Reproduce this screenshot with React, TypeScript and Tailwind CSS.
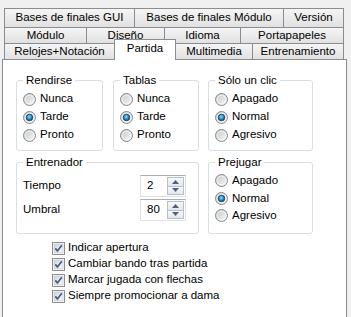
import { useId } from "react";

const ROW1 = [
  { label: "Bases de finales GUI", w: "w-[130px]" },
  { label: "Bases de finales Módulo", w: "w-[149px]" },
  { label: "Versión", w: "w-[61px]" },
];
const ROW2 = [
  { label: "Módulo", w: "w-[82px]" },
  { label: "Diseño", w: "w-[78px]" },
  { label: "Idioma", w: "w-[76px]" },
  { label: "Portapapeles", w: "w-[104px]" },
];

const CHECKS = [
  "Indicar apertura",
  "Cambiar bando tras partida",
  "Marcar jugada con flechas",
  "Siempre promocionar a dama",
];

function Tab({ label, w, last }: { label: string; w: string; last?: boolean }) {
  return (
    <div
      className={`${w} h-full flex items-center justify-center border-t border-l border-[#898c95] bg-gradient-to-b from-[#f5f5f5] to-[#e1e1e1] ${last ? "border-r" : ""}`}
    >
      {label}
    </div>
  );
}

function Radio({ checked }: { checked?: boolean }) {
  const id = useId().replace(/:/g, "");
  return (
    <svg width="13" height="13" viewBox="0 0 13 13" className="flex-shrink-0">
      <defs>
        <linearGradient id={`o${id}`} x1="0" y1="0" x2="1" y2="1">
          <stop offset="0" stopColor="#c8c8c8" />
          <stop offset="1" stopColor="#f7f7f7" />
        </linearGradient>
        <radialGradient id={`d${id}`} cx="0.45" cy="0.4" r="0.6">
          <stop offset="0" stopColor="#8fdcfb" />
          <stop offset="0.55" stopColor="#2b8fd0" />
          <stop offset="1" stopColor="#10476f" />
        </radialGradient>
      </defs>
      <circle cx="6.5" cy="6.5" r="6" fill={`url(#o${id})`} stroke="#868a90" strokeWidth="1" />
      <circle cx="6.5" cy="6.5" r="4.3" fill="none" stroke="#ffffff" strokeOpacity="0.6" strokeWidth="1" />
      {checked && <circle cx="6.5" cy="6.5" r="3.3" fill={`url(#d${id})`} stroke="#1b3f5f" strokeWidth="0.8" />}
    </svg>
  );
}

function Checkbox() {
  const id = useId().replace(/:/g, "");
  return (
    <svg width="13" height="13" viewBox="0 0 13 13" className="flex-shrink-0">
      <defs>
        <linearGradient id={`c${id}`} x1="0" y1="0" x2="1" y2="1">
          <stop offset="0" stopColor="#d6d6d6" />
          <stop offset="1" stopColor="#fbfbfb" />
        </linearGradient>
      </defs>
      <rect x="0.5" y="0.5" width="12" height="12" fill="#ffffff" stroke="#8e8f8f" />
      <rect x="2" y="2" width="9" height="9" fill={`url(#c${id})`} stroke="#b8bcc2" strokeWidth="0.6" />
      <path d="M3.3 6.4 L5.4 8.9 L9.8 3.2" fill="none" stroke="#3f5b99" strokeWidth="1.7" />
    </svg>
  );
}

function RadioRow({ label, checked, h }: { label: string; checked?: boolean; h: string }) {
  return (
    <div className={`flex items-center gap-[4px] ${h}`}>
      <Radio checked={checked} />
      <span>{label}</span>
    </div>
  );
}

function Group({ title, w, children, pb }: { title: string; w: string; children: React.ReactNode; pb: string }) {
  return (
    <fieldset className={`${w} border border-[#d5dfe5] rounded-[3px] px-[6px] ${pb} min-w-0`}>
      <legend className="px-[3px] leading-[14px]">{title}</legend>
      {children}
    </fieldset>
  );
}

function SpinBox({ value }: { value: string }) {
  return (
    <div className="w-[46px] h-[22px] flex items-stretch border border-[#dde1e7] border-t-[#abadb3] bg-white">
      <div className="flex-1 flex items-center pl-[6px]">{value}</div>
      <div className="w-[18px] flex flex-col py-px pr-px">
        <div className="flex-1 flex items-center justify-center border border-[#b4c0cc] bg-gradient-to-b from-[#f8f8f8] to-[#e4e7ea]">
          <svg width="7" height="4" viewBox="0 0 7 4"><path d="M0 4 L3.5 0 L7 4 Z" fill="#4d6185" /></svg>
        </div>
        <div className="flex-1 flex items-center justify-center border border-t-0 border-[#b4c0cc] bg-gradient-to-b from-[#f8f8f8] to-[#e4e7ea]">
          <svg width="7" height="4" viewBox="0 0 7 4"><path d="M0 0 L3.5 4 L7 0 Z" fill="#4d6185" /></svg>
        </div>
      </div>
    </div>
  );
}

export default function App() {
  return (
    <div className="w-[351px] h-[317px] overflow-hidden bg-[#f0f0f0] pt-[8px] text-[11.5px] text-black font-['Liberation_Sans',Arial,sans-serif]">
      {/* Tab rows */}
      <div className="flex ml-[4px] h-[19px]">
        {ROW1.map((t, i) => (
          <Tab key={t.label} label={t.label} w={t.w} last={i === ROW1.length - 1} />
        ))}
      </div>
      <div className="flex ml-[4px] h-[16px]">
        {ROW2.map((t, i) => (
          <Tab key={t.label} label={t.label} w={t.w} last={i === ROW2.length - 1} />
        ))}
      </div>
      <div className="flex items-start ml-[4px] h-[16px]">
        <Tab label="Relojes+Notación" w="w-[110px]" />
        <div className="relative z-10 -mt-[4px] h-[21px] w-[62px] flex items-center justify-center pb-[2px] bg-white border-l border-t border-r border-[#898c95]">
          Partida
        </div>
        <div className="w-[76px] h-full flex items-center justify-center border-t border-[#898c95] bg-gradient-to-b from-[#f5f5f5] to-[#e1e1e1]">
          Multimedia
        </div>
        <Tab label="Entrenamiento" w="w-[92px]" last />
      </div>

      {/* Panel */}
      <div className="ml-[2px] w-[345px] h-[270px] bg-white border border-[#898c95] pl-[13px] pt-[13px]">
        <div className="flex items-start">
          <Group title="Rendirse" w="w-[87px]" pb="pb-[6px]">
            <div className="pt-[3px]">
              <RadioRow label="Nunca" h="h-[18px]" />
              <RadioRow label="Tarde" checked h="h-[18px]" />
              <RadioRow label="Pronto" h="h-[18px]" />
            </div>
          </Group>
          <div className="ml-[10px]">
            <Group title="Tablas" w="w-[86px]" pb="pb-[6px]">
              <div className="pt-[3px]">
                <RadioRow label="Nunca" h="h-[18px]" />
                <RadioRow label="Tarde" checked h="h-[18px]" />
                <RadioRow label="Pronto" h="h-[18px]" />
              </div>
            </Group>
          </div>
          <div className="ml-[9px]">
            <Group title="Sólo un clic" w="w-[105px]" pb="pb-[6px]">
              <div className="pt-[3px]">
                <RadioRow label="Apagado" h="h-[18px]" />
                <RadioRow label="Normal" checked h="h-[18px]" />
                <RadioRow label="Agresivo" h="h-[18px]" />
              </div>
            </Group>
          </div>
        </div>

        <div className="flex items-stretch mt-[4px]">
          <Group title="Entrenador" w="w-[183px]" pb="pb-[11px]">
            <div className="pt-[5px]">
              <div className="flex items-center h-[24px]">
                <span className="w-[117px]">Tiempo</span>
                <SpinBox value="2" />
              </div>
              <div className="flex items-center h-[24px]">
                <span className="w-[117px]">Umbral</span>
                <SpinBox value="80" />
              </div>
            </div>
          </Group>
          <div className="ml-[9px] flex">
            <Group title="Prejugar" w="w-[105px]" pb="pb-[6px]">
              <div className="pt-[3px]">
                <RadioRow label="Apagado" h="h-[17.5px]" />
                <RadioRow label="Normal" checked h="h-[17.5px]" />
                <RadioRow label="Agresivo" h="h-[17.5px]" />
              </div>
            </Group>
          </div>
        </div>

        <div className="ml-[36px] mt-[6px]">
          {CHECKS.map((c) => (
            <div key={c} className="flex items-center gap-[3px] h-[16px]">
              <Checkbox />
              <span>{c}</span>
            </div>
          ))}
        </div>
      </div>
    </div>
  );
}
